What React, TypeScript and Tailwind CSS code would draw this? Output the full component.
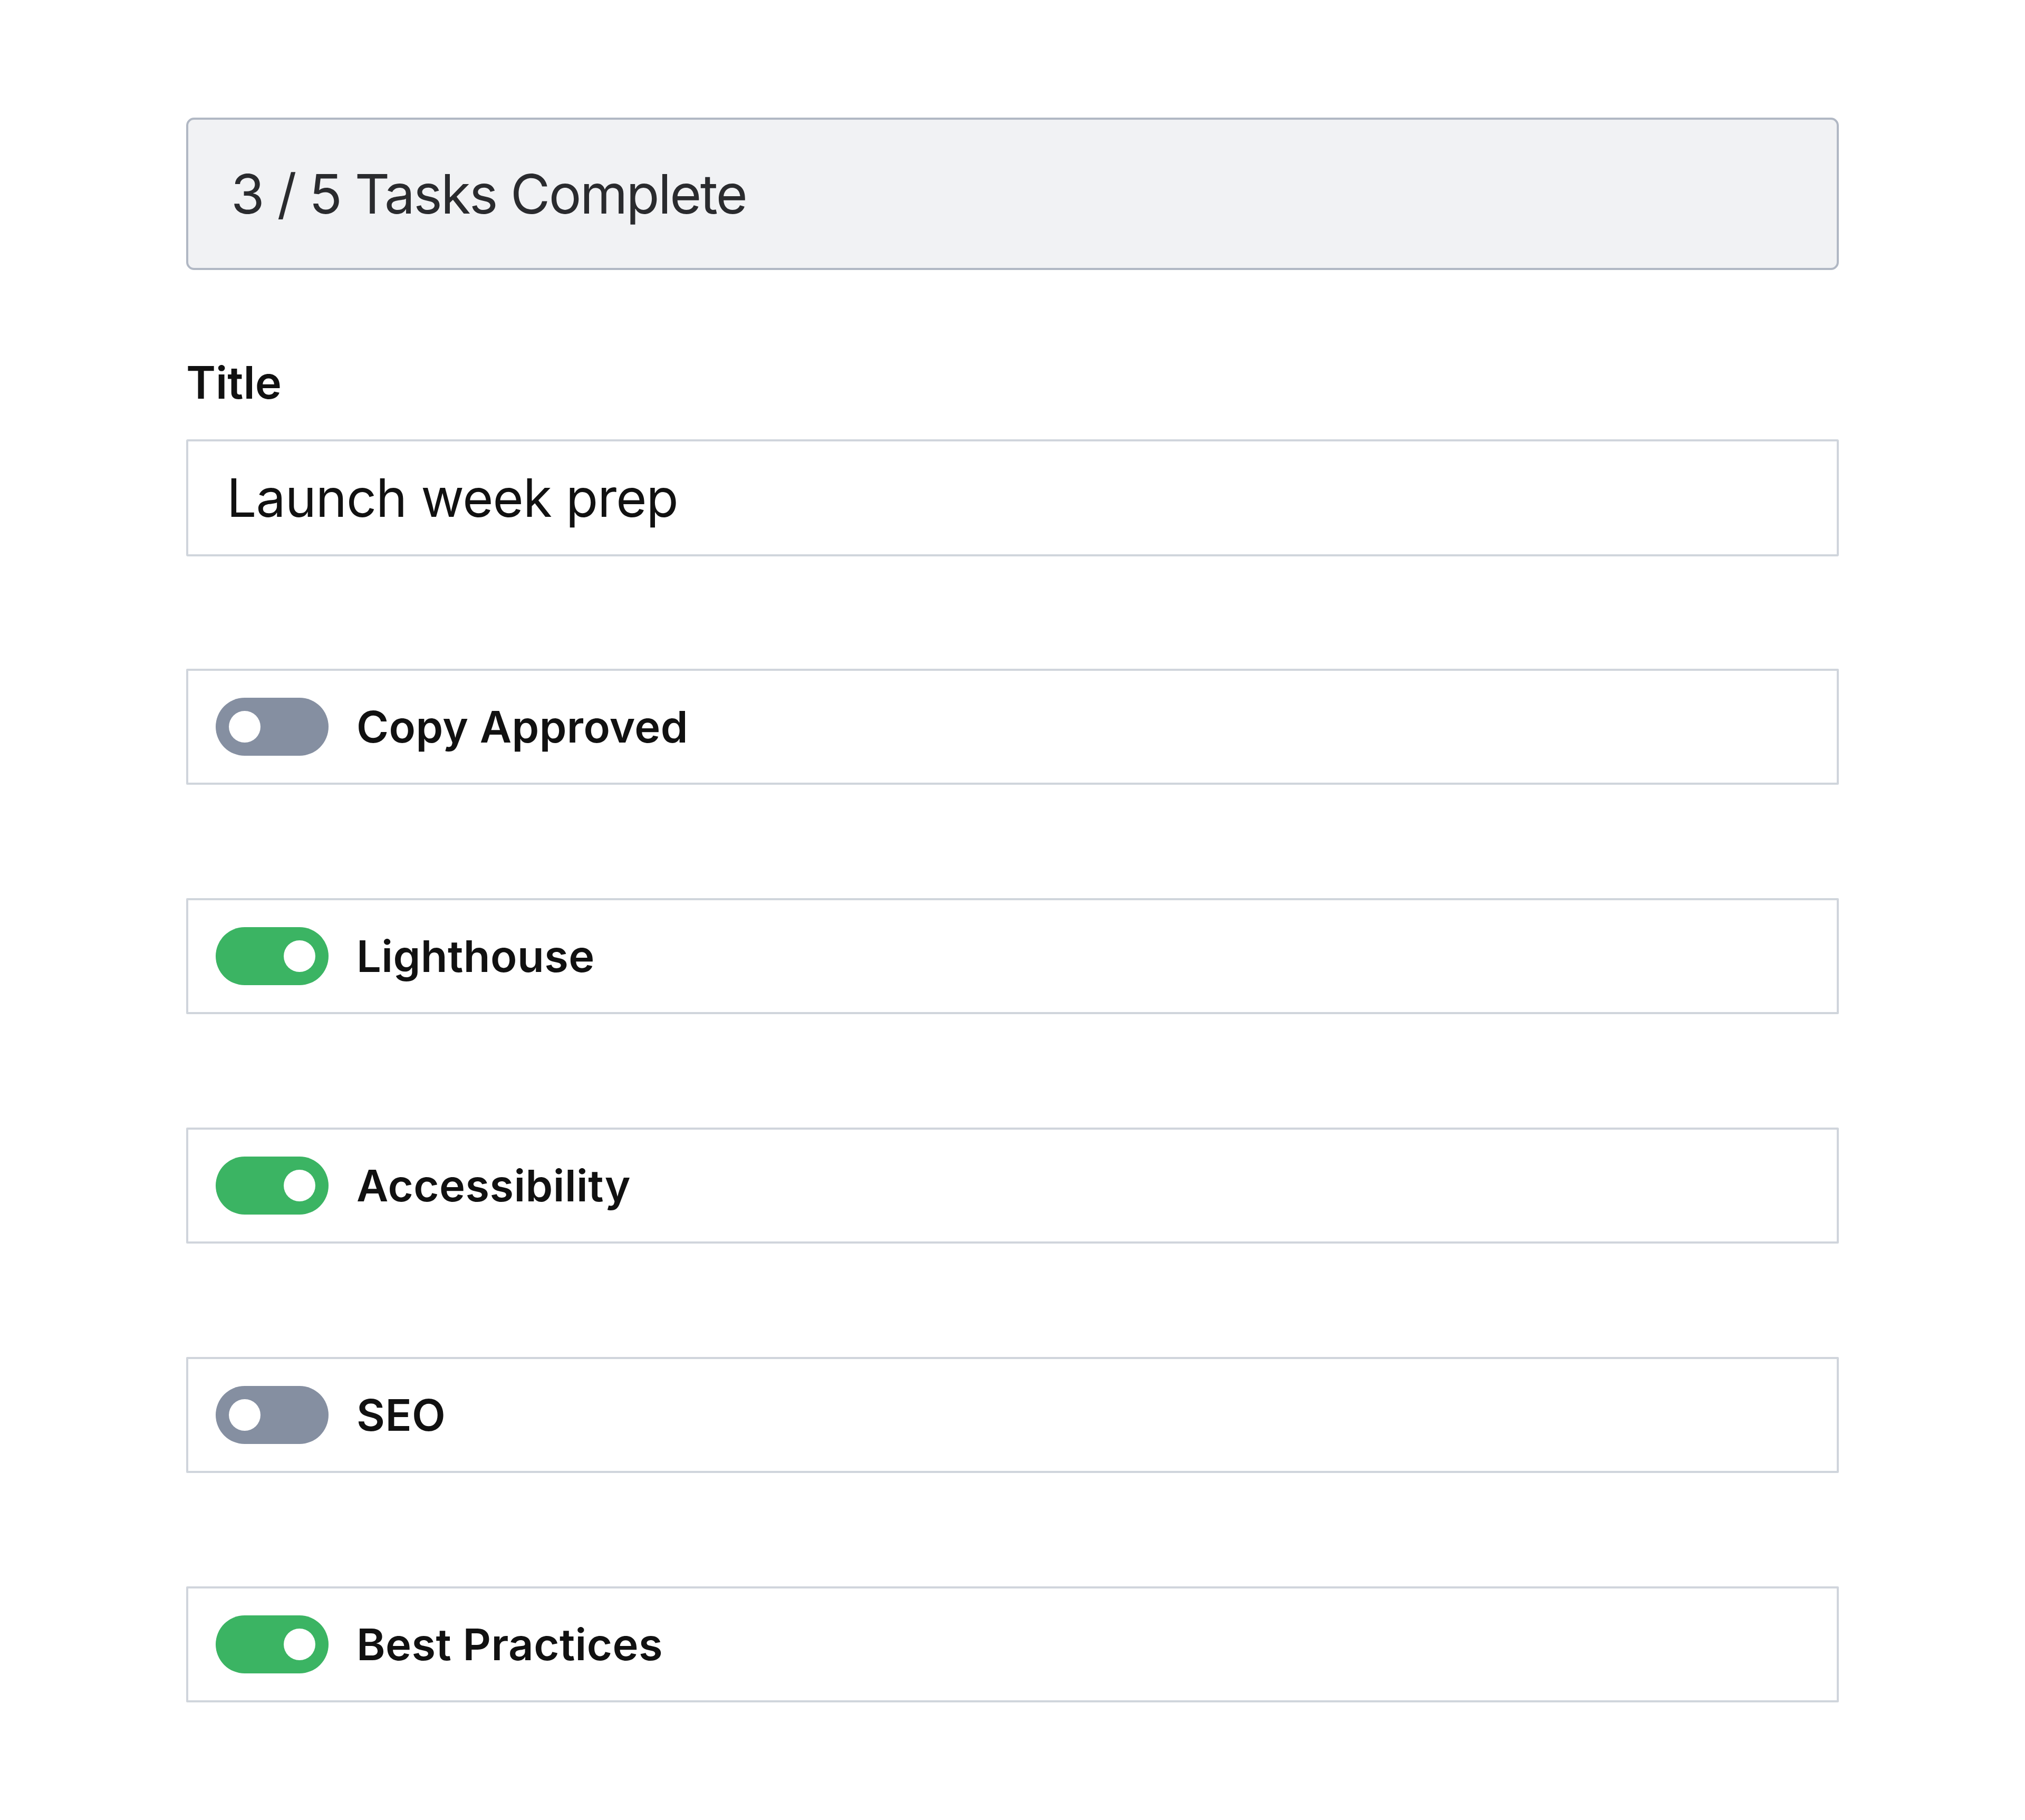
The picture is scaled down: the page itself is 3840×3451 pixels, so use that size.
import React from 'react';

interface Task {
  label: string;
  done: boolean;
}

const tasks: Task[] = [
  { label: 'Copy Approved', done: false },
  { label: 'Lighthouse', done: true },
  { label: 'Accessibility', done: true },
  { label: 'SEO', done: false },
  { label: 'Best Practices', done: true },
];

function Toggle({ on }: { on: boolean }) {
  return (
    <div
      className={`flex h-[110px] w-[214px] shrink-0 items-center rounded-full px-[25px] ${
        on ? 'justify-end bg-[#3bb463]' : 'justify-start bg-[#858fa1]'
      }`}
    >
      <div className="h-[60px] w-[60px] rounded-full bg-white" />
    </div>
  );
}

function TaskRow({ label, done }: Task) {
  return (
    <div className="flex h-[220px] items-center gap-[53px] rounded-[2px] border-4 border-[#d0d5dc] bg-white pl-[52px]">
      <Toggle on={done} />
      <span className="text-[83px] font-semibold leading-none tracking-[0.4px] text-[#111111]">{label}</span>
    </div>
  );
}

export default function App() {
  const complete = tasks.filter((t) => t.done).length;

  return (
    <div className="min-h-[3451px] bg-white px-[353px] py-[223px] font-['Inter','Noto_Sans',sans-serif]">
      <div className="flex h-[289px] items-center rounded-[15px] border-4 border-[#b1b8c4] bg-[#f1f2f4] pl-[81px]">
        <span className="text-[103px] font-normal leading-none tracking-[-2.6px] text-[#2a2b2e]">
          {complete} / {tasks.length} Tasks Complete
        </span>
      </div>

      <label className="mt-[171px] block text-[85px] font-semibold leading-none text-[#111111]">
        Title
      </label>
      <div className="mt-[65px] flex h-[222px] items-center rounded-[3px] border-4 border-[#d0d5dc] bg-white pl-[73px]">
        <span className="text-[100px] leading-none tracking-[-1px] text-[#111111]">Launch week prep</span>
      </div>

      <div className="mt-[213px] flex flex-col gap-[215px]">
        {tasks.map((t) => (
          <TaskRow key={t.label} label={t.label} done={t.done} />
        ))}
      </div>
    </div>
  );
}
